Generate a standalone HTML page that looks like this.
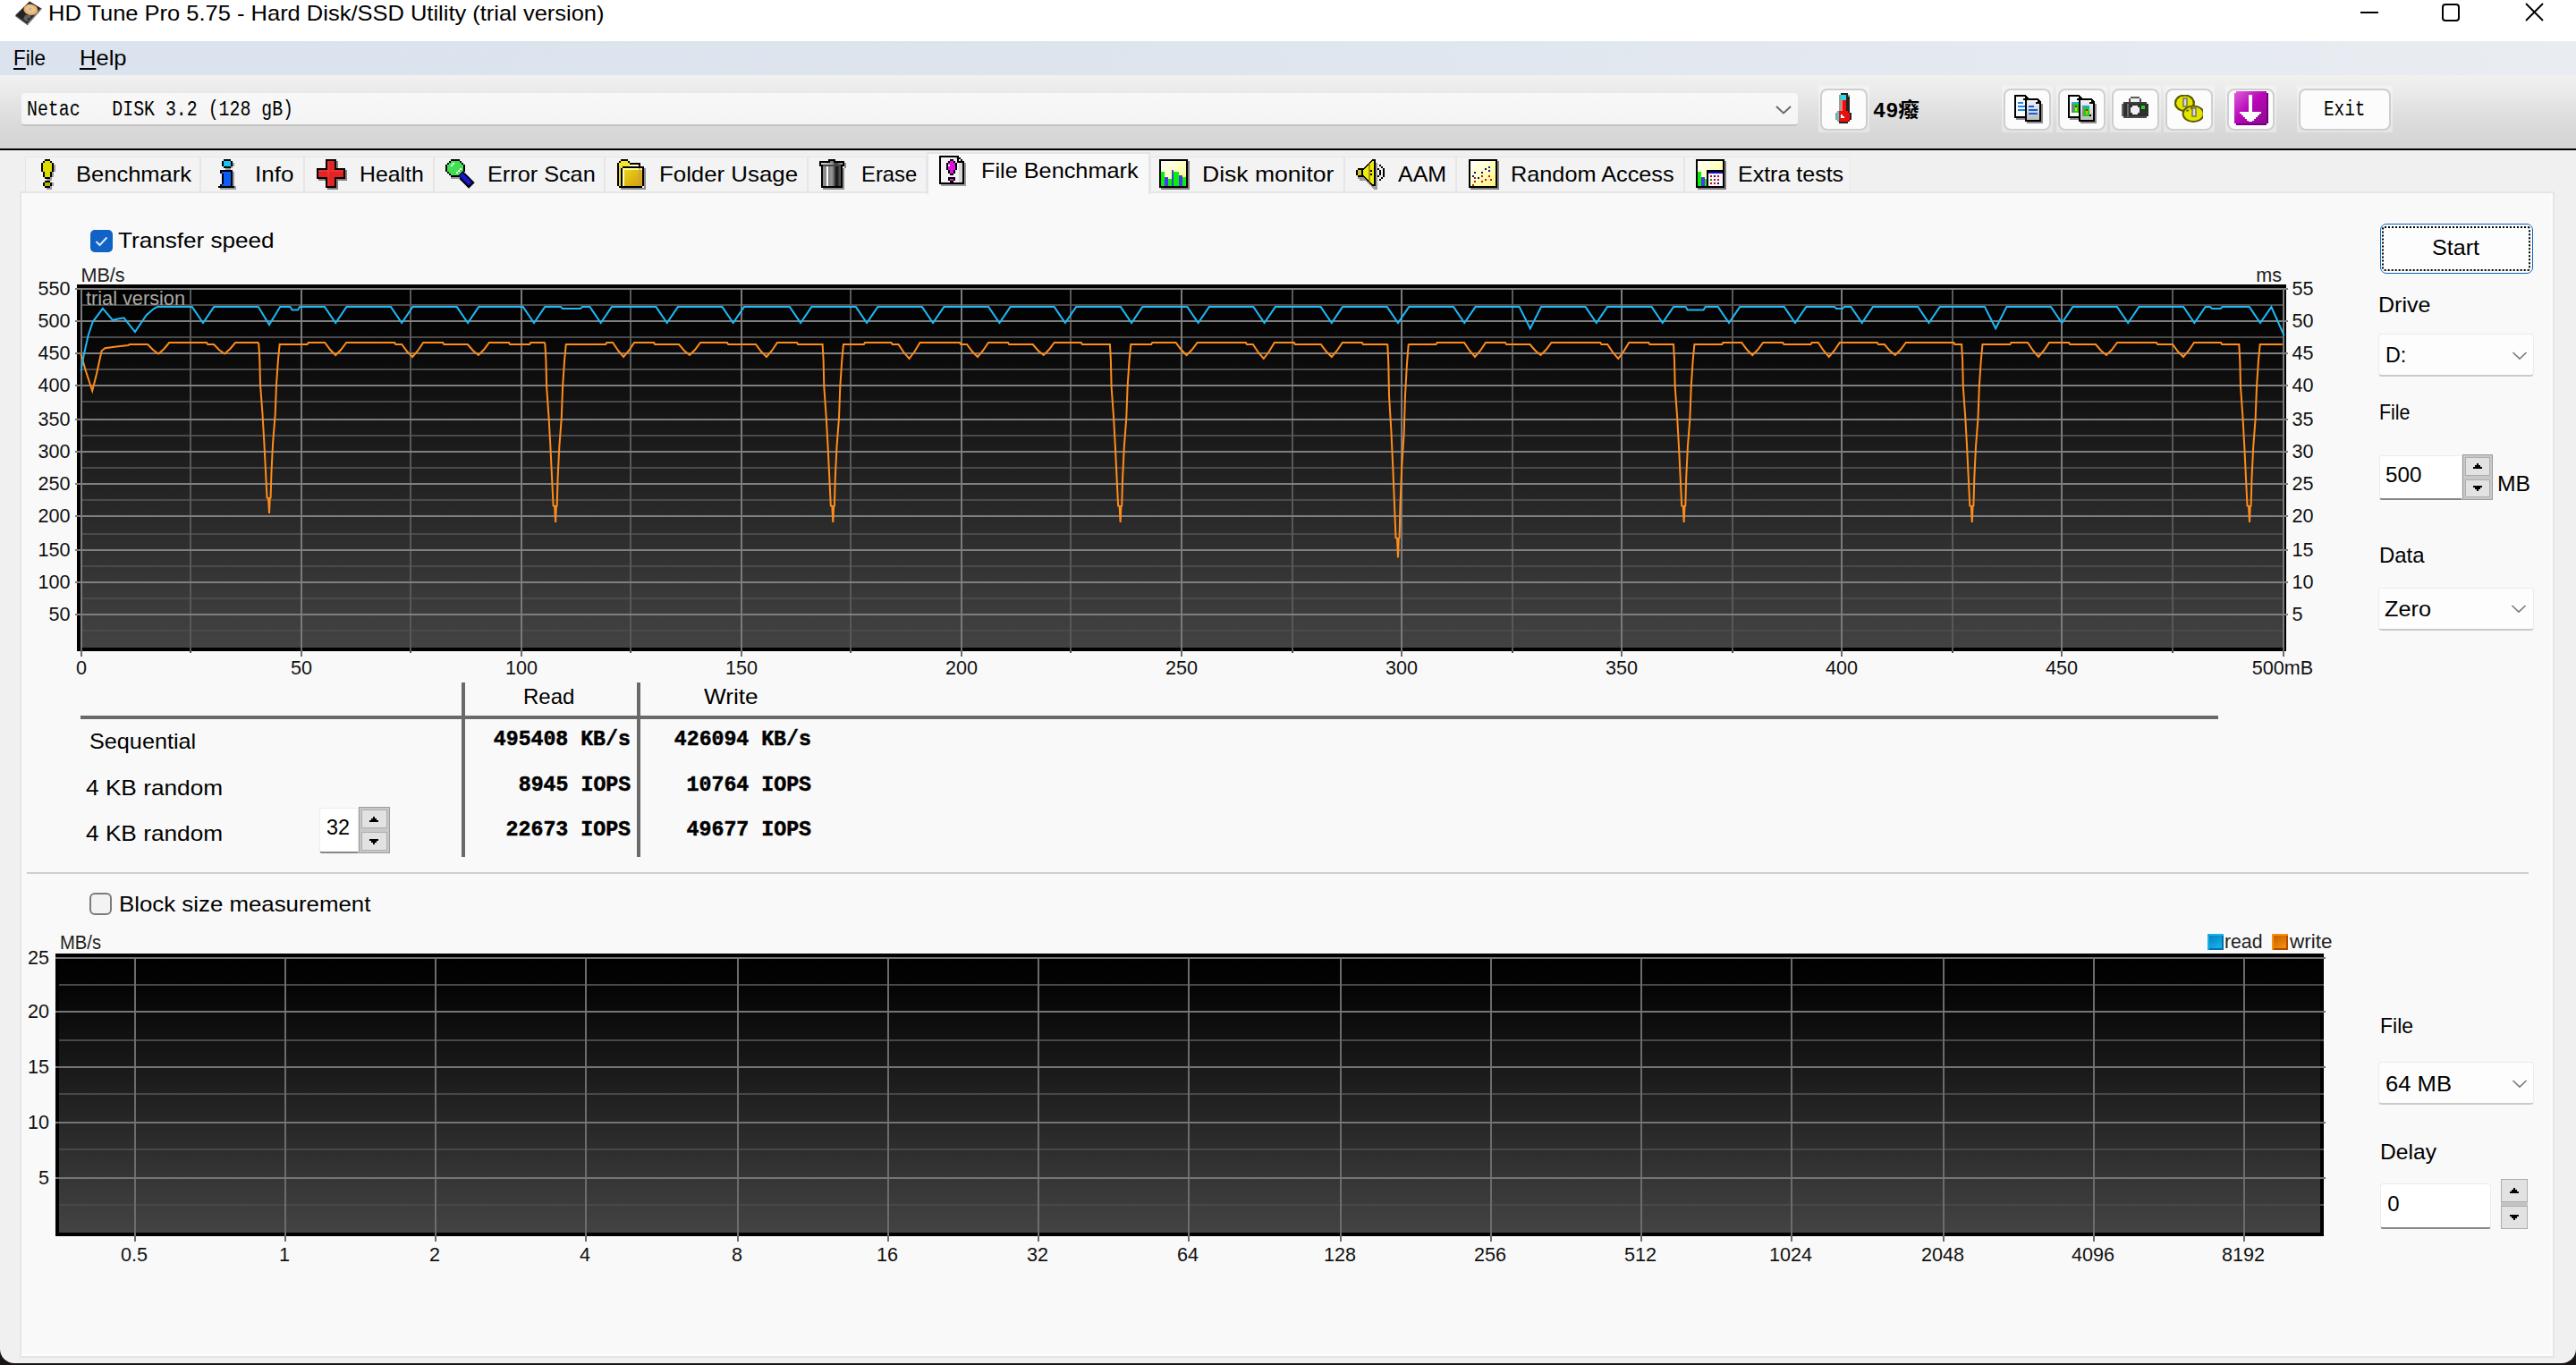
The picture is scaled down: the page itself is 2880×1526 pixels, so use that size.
<!DOCTYPE html>
<html lang="en"><head><meta charset="utf-8"><title>HD Tune Pro 5.75 - Hard Disk/SSD Utility (trial version)</title>
<style>
html,body{margin:0;padding:0;}
body{width:2880px;height:1526px;overflow:hidden;background:#1a1216;position:relative;font-family:"Liberation Sans",sans-serif;}
.a{position:absolute;}
div.a{box-sizing:border-box;}
.t{position:absolute;white-space:pre;line-height:1;}
.fsans{font-family:"Liberation Sans",sans-serif;}
.fmono{font-family:"Liberation Mono",monospace;}
.fserif{font-family:"Liberation Serif",serif;}
.fcjk{font-family:"Liberation Mono","Noto Sans CJK SC",monospace;}
.t u{text-decoration-thickness:2px;text-underline-offset:3px;}
.px{shape-rendering:crispEdges;}
</style></head>
<body>
<div class="a" style="left:0.00px;top:0.00px;width:2880.00px;height:1524.00px;background:#f0f0f0;border-radius:0 0 16px 16px;"></div>
<div class="a" style="left:0.00px;top:0.00px;width:2880.00px;height:46.00px;background:#fff;"></div>
<div class="a" style="left:0.00px;top:46.00px;width:2880.00px;height:38.00px;background:linear-gradient(90deg,#dbe3ee 0%,#dde4ee 40%,#e9edf2 100%);"></div>
<div class="a" style="left:0.00px;top:84.00px;width:2880.00px;height:82.00px;background:linear-gradient(180deg,#f1f1ef 0%,#ebebeb 20%,#e2e2e2 45%,#d9d9d9 72%,#d4d4d4 100%);"></div>
<div class="a" style="left:0.00px;top:166.00px;width:2880.00px;height:2.00px;background:#000;"></div>
<svg class="a" style="left:16px;top:0px" width="34" height="30" viewBox="16 0 34 30">
<polygon points="33,1.4 46.8,9.8 31.2,27.6 17.2,17" fill="#242424"/>
<polygon points="46.8,9.8 31.2,27.6 30.2,26.6 45.4,9.6" fill="#8a8a8a"/>
<polygon points="17.2,17 31.2,27.6 31.2,28.6 17.2,18.2" fill="#4a4a4a"/>
<ellipse cx="34.4" cy="10.8" rx="8" ry="6.2" fill="#e8b070" transform="rotate(8 34.4 10.8)"/>
<ellipse cx="34.2" cy="10.2" rx="5.4" ry="4" fill="#f0c488" transform="rotate(8 34.2 10.2)"/>
<ellipse cx="33.8" cy="10.4" rx="2" ry="1.7" fill="#b4bcb4"/>
<polygon points="28,17 35,16.5 33,23 29,24 26,21" fill="#6c6c6c" opacity="0.85"/>
<rect x="31" y="20.5" width="2" height="1.6" fill="#111"/>
</svg>
<span class="t fsans" id="t1" style="top:2.88px;font-size:24.00px;color:#000;left:54.30px;transform-origin:0 0;transform:scaleX(1.0615);">HD Tune Pro 5.75 - Hard Disk/SSD Utility (trial version)</span>
<svg class="a" style="left:2630px;top:0" width="230" height="30" viewBox="0 0 230 30" fill="none" stroke="#000" stroke-width="2">
<line x1="9" y1="14" x2="29" y2="14"/>
<rect x="101" y="5" width="18" height="18" rx="3"/>
<path d="M194,4 L213,23 M213,4 L194,23" stroke-width="1.9"/>
</svg>
<span class="t fsans" id="t2" style="top:52.68px;font-size:24.00px;color:#000;left:14.80px;transform-origin:0 0;transform:scaleX(0.9305);"><u>F</u>ile</span>
<span class="t fsans" id="t3" style="top:52.68px;font-size:24.00px;color:#000;left:88.80px;transform-origin:0 0;transform:scaleX(1.0633);"><u>H</u>elp</span>
<div class="a" style="left:24.00px;top:104.00px;width:1986.00px;height:37.00px;background:linear-gradient(180deg,#f8f8f8,#f4f4f4);border-bottom:2px solid #c2c2c2;border-radius:4px;box-sizing:border-box;"></div>
<span class="t fmono" id="t4" style="top:112.08px;font-size:23.00px;color:#000;left:29.50px;transform-origin:0 0;transform:scaleX(0.8636);">Netac   DISK 3.2 (128 gB)</span>
<svg class="a" style="left:1984px;top:116px" width="20" height="14" viewBox="0 0 20 14" fill="none" stroke="#6a6a6a" stroke-width="2"><path d="M2,3 L10,10.5 L18,3"/></svg>
<div class="a" style="left:2032.50px;top:96.00px;width:57.00px;height:52.00px;background:rgba(255,255,255,0.35);"></div>
<div class="a" style="left:2034.50px;top:98.50px;width:53.00px;height:47.00px;background:#fcfcfc;border:2px solid #cfcfcf;border-radius:8px;box-sizing:border-box;"></div>
<div class="a" style="left:2238.40px;top:96.00px;width:57.00px;height:52.00px;background:rgba(255,255,255,0.35);"></div>
<div class="a" style="left:2240.40px;top:98.50px;width:53.00px;height:47.00px;background:#fcfcfc;border:2px solid #cfcfcf;border-radius:8px;box-sizing:border-box;"></div>
<div class="a" style="left:2298.60px;top:96.00px;width:57.00px;height:52.00px;background:rgba(255,255,255,0.35);"></div>
<div class="a" style="left:2300.60px;top:98.50px;width:53.00px;height:47.00px;background:#fcfcfc;border:2px solid #cfcfcf;border-radius:8px;box-sizing:border-box;"></div>
<div class="a" style="left:2358.50px;top:96.00px;width:57.00px;height:52.00px;background:rgba(255,255,255,0.35);"></div>
<div class="a" style="left:2360.50px;top:98.50px;width:53.00px;height:47.00px;background:#fcfcfc;border:2px solid #cfcfcf;border-radius:8px;box-sizing:border-box;"></div>
<div class="a" style="left:2418.50px;top:96.00px;width:57.00px;height:52.00px;background:rgba(255,255,255,0.35);"></div>
<div class="a" style="left:2420.50px;top:98.50px;width:53.00px;height:47.00px;background:#fcfcfc;border:2px solid #cfcfcf;border-radius:8px;box-sizing:border-box;"></div>
<div class="a" style="left:2488.40px;top:96.00px;width:57.00px;height:52.00px;background:rgba(255,255,255,0.35);"></div>
<div class="a" style="left:2490.40px;top:98.50px;width:53.00px;height:47.00px;background:#fcfcfc;border:2px solid #cfcfcf;border-radius:8px;box-sizing:border-box;"></div>
<div class="a" style="left:2568.40px;top:96.00px;width:107.00px;height:52.00px;background:rgba(255,255,255,0.35);"></div>
<div class="a" style="left:2570.40px;top:98.50px;width:103.00px;height:47.00px;background:#fcfcfc;border:2px solid #cfcfcf;border-radius:8px;box-sizing:border-box;"></div>
<span class="t fmono" id="t5" style="top:111.98px;font-size:23.00px;color:#000;left:2598.00px;transform-origin:0 0;transform:scaleX(0.8421);">Exit</span>
<span class="t fcjk" id="t6" style="top:113.88px;font-size:23.00px;color:#000;font-weight:bold;left:2094.00px;transform-origin:0 0;transform:scaleX(1.0275);">49癈</span>
<svg class="a px" style="left:2046.0px;top:104.0px" width="32" height="34" viewBox="0 0 16 17"><rect x="6" y="0" width="4" height="1" fill="#2a2020"/><rect x="5" y="1" width="1" height="1" fill="#90a0a0"/><rect x="6" y="1" width="3" height="1" fill="#30d8e0"/><rect x="9" y="1" width="1" height="1" fill="#2a2020"/><rect x="10" y="1" width="1" height="1" fill="#90a0a0"/><rect x="5" y="2" width="1" height="1" fill="#90a0a0"/><rect x="6" y="2" width="3" height="1" fill="#30d8e0"/><rect x="9" y="2" width="2" height="1" fill="#2a2020"/><rect x="5" y="3" width="1" height="1" fill="#90a0a0"/><rect x="6" y="3" width="3" height="1" fill="#30d8e0"/><rect x="9" y="3" width="2" height="1" fill="#2a2020"/><rect x="5" y="4" width="1" height="1" fill="#90a0a0"/><rect x="6" y="4" width="1" height="1" fill="#f08070"/><rect x="7" y="4" width="2" height="1" fill="#e81010"/><rect x="9" y="4" width="2" height="1" fill="#2a2020"/><rect x="5" y="5" width="1" height="1" fill="#90a0a0"/><rect x="6" y="5" width="1" height="1" fill="#f08070"/><rect x="7" y="5" width="2" height="1" fill="#e81010"/><rect x="9" y="5" width="2" height="1" fill="#2a2020"/><rect x="5" y="6" width="1" height="1" fill="#90a0a0"/><rect x="6" y="6" width="1" height="1" fill="#f08070"/><rect x="7" y="6" width="2" height="1" fill="#e81010"/><rect x="9" y="6" width="2" height="1" fill="#2a2020"/><rect x="5" y="7" width="1" height="1" fill="#90a0a0"/><rect x="6" y="7" width="1" height="1" fill="#f08070"/><rect x="7" y="7" width="2" height="1" fill="#e81010"/><rect x="9" y="7" width="2" height="1" fill="#2a2020"/><rect x="5" y="8" width="1" height="1" fill="#90a0a0"/><rect x="6" y="8" width="1" height="1" fill="#f08070"/><rect x="7" y="8" width="2" height="1" fill="#e81010"/><rect x="9" y="8" width="2" height="1" fill="#2a2020"/><rect x="5" y="9" width="1" height="1" fill="#90a0a0"/><rect x="6" y="9" width="1" height="1" fill="#f08070"/><rect x="7" y="9" width="2" height="1" fill="#e81010"/><rect x="9" y="9" width="2" height="1" fill="#2a2020"/><rect x="4" y="10" width="1" height="1" fill="#90a0a0"/><rect x="5" y="10" width="5" height="1" fill="#e81010"/><rect x="10" y="10" width="1" height="1" fill="#2a2020"/><rect x="3" y="11" width="1" height="1" fill="#90a0a0"/><rect x="4" y="11" width="1" height="1" fill="#30d8e0"/><rect x="5" y="11" width="6" height="1" fill="#e81010"/><rect x="11" y="11" width="1" height="1" fill="#2a2020"/><rect x="3" y="12" width="1" height="1" fill="#90a0a0"/><rect x="4" y="12" width="1" height="1" fill="#30d8e0"/><rect x="5" y="12" width="1" height="1" fill="#e81010"/><rect x="6" y="12" width="1" height="1" fill="#fff"/><rect x="7" y="12" width="4" height="1" fill="#e81010"/><rect x="11" y="12" width="1" height="1" fill="#2a2020"/><rect x="3" y="13" width="1" height="1" fill="#90a0a0"/><rect x="4" y="13" width="1" height="1" fill="#30d8e0"/><rect x="5" y="13" width="1" height="1" fill="#e81010"/><rect x="6" y="13" width="2" height="1" fill="#fff"/><rect x="8" y="13" width="3" height="1" fill="#e81010"/><rect x="11" y="13" width="1" height="1" fill="#2a2020"/><rect x="3" y="14" width="1" height="1" fill="#90a0a0"/><rect x="4" y="14" width="1" height="1" fill="#30d8e0"/><rect x="5" y="14" width="6" height="1" fill="#e81010"/><rect x="11" y="14" width="1" height="1" fill="#2a2020"/><rect x="4" y="15" width="1" height="1" fill="#90a0a0"/><rect x="5" y="15" width="5" height="1" fill="#e81010"/><rect x="10" y="15" width="1" height="1" fill="#900808"/><rect x="5" y="16" width="5" height="1" fill="#2a2020"/></svg>
<svg width="0" height="0" style="position:absolute"><defs><linearGradient id="pgr" x1="0" y1="0" x2="0" y2="1"><stop offset="0" stop-color="#f4f4f8"/><stop offset="1" stop-color="#bcbcbc"/></linearGradient></defs></svg>
<svg class="a px" style="left:2252.0px;top:106.0px" width="32" height="32" viewBox="0 0 16 16"><rect x="1" y="13" width="6" height="1" fill="#8c8c8c"/><rect x="7" y="15" width="9" height="1" fill="#8c8c8c"/><rect x="15" y="5" width="1" height="11" fill="#8c8c8c"/><path d="M0,0 h6 l2,2 v11 h-8 z" fill="#000"/><path d="M1,1 h4 v2 h2 v9 h-6 z" fill="#fafafa"/><rect x="5" y="1" width="1" height="1" fill="#fff"/><rect x="2" y="4" width="3" height="1" fill="#1888f0"/><rect x="2" y="6" width="5" height="1" fill="#1888f0"/><rect x="2" y="8" width="5" height="1" fill="#1888f0"/><path d="M6,2 h7 l2,2 v11 h-9 z" fill="#000"/><path d="M7,3 h5 v2 h2 v9 h-7 z" fill="url(#pgr)"/><rect x="12" y="3" width="1" height="1" fill="#ffffd8"/><rect x="8" y="6" width="3" height="1" fill="#1060e0"/><rect x="8" y="8" width="5" height="1" fill="#1060e0"/><rect x="8" y="10" width="5" height="1" fill="#1060e0"/></svg>
<svg class="a px" style="left:2312.0px;top:106.0px" width="32" height="32" viewBox="0 0 16 16"><rect x="1" y="13" width="6" height="1" fill="#8c8c8c"/><rect x="7" y="15" width="9" height="1" fill="#8c8c8c"/><rect x="15" y="5" width="1" height="11" fill="#8c8c8c"/><path d="M0,0 h6 l2,2 v11 h-8 z" fill="#000"/><path d="M1,1 h4 v2 h2 v9 h-6 z" fill="#fafafa"/><rect x="5" y="1" width="1" height="1" fill="#fff"/><rect x="2" y="4" width="4" height="6" fill="#18d018"/><rect x="2" y="4" width="4" height="1" fill="#18b8e0"/><rect x="2" y="5" width="1" height="5" fill="#9060c0"/><rect x="4" y="6" width="1" height="1" fill="#c01010"/><rect x="4" y="7" width="1" height="2" fill="#c8e010"/><path d="M6,2 h7 l2,2 v11 h-9 z" fill="#000"/><path d="M7,3 h5 v2 h2 v9 h-7 z" fill="url(#pgr)"/><rect x="12" y="3" width="1" height="1" fill="#ffffd8"/><rect x="8" y="6" width="4" height="6" fill="#18d018"/><rect x="8" y="6" width="4" height="1" fill="#18a8e8"/><rect x="8" y="7" width="1" height="5" fill="#808890"/><rect x="10" y="8" width="1" height="1" fill="#c01010"/><rect x="10" y="9" width="1" height="2" fill="#c8c010"/><rect x="12" y="11" width="1" height="1" fill="#000"/></svg>
<svg class="a px" style="left:2372.0px;top:106.0px" width="32" height="32" viewBox="0 0 16 16"><rect x="4" y="2" width="7" height="3" fill="#4a4a4a"/><rect x="5" y="1" width="5" height="1" fill="#5a5a5a"/><rect x="5" y="2" width="5" height="2" fill="#eee"/><rect x="0" y="5" width="15" height="7" fill="#303030"/><rect x="1" y="4" width="13" height="1" fill="#3c3c3c"/><rect x="1" y="12" width="13" height="1" fill="#4c4c4c"/><rect x="0" y="5" width="1" height="7" fill="#6a6a6a"/><rect x="3" y="5" width="1" height="7" fill="#6c6c6c"/><rect x="6" y="6" width="3" height="5" fill="#f0eef4"/><rect x="5" y="7" width="5" height="3" fill="#f0eef4"/><rect x="11" y="6" width="2" height="2" fill="#18d818"/></svg>
<svg class="a" style="left:2431.0px;top:106.0px" width="32" height="32" viewBox="0 0 16 16"><ellipse cx="5.7" cy="4.6" rx="5.2" ry="4.4" fill="#e4e400" stroke="#5c5c00" stroke-width="1"/><ellipse cx="10.6" cy="10.6" rx="5.8" ry="4.4" fill="#e4e400" stroke="#5c5c00" stroke-width="1"/><ellipse cx="5.7" cy="4.6" rx="5.2" ry="4.4" fill="none" stroke="#5c5c00" stroke-width="1" stroke-dasharray="1.3 1.3"/><rect x="5" y="2" width="2" height="4.5" fill="#d8d8e8" stroke="#707048" stroke-width="0.7"/><rect x="10" y="7.5" width="2" height="4.5" fill="#d8d8e8" stroke="#707048" stroke-width="0.7"/></svg>
<svg class="a" style="left:2498px;top:102px" width="38" height="38" viewBox="0 0 38 38">
<defs><linearGradient id="pg" x1="0" y1="0" x2="1" y2="1"><stop offset="0" stop-color="#dc60dc"/><stop offset="0.45" stop-color="#b808b8"/><stop offset="1" stop-color="#8c0890"/></linearGradient></defs>
<path d="M2,0 h34 v2 h2 v34 h-2 v2 h-34 v-2 h-2 v-34 h2 z" fill="url(#pg)"/>
<path d="M36,2 h2 v34 h-2 v2 h-34 v-2 h34 z" fill="#680070" opacity="0.8"/>
<path d="M16,4 h4 v19 h10 v2 h-2 v2 h-2 v2 h-2 v2 h-2 v2 h-2 v1 h-4 v-1 h-2 v-2 h-2 v-2 h-2 v-2 h-2 v-2 h-2 v-2 h10 z" fill="#fff"/>
</svg>
<div class="a" style="left:28.00px;top:175.00px;width:196.00px;height:40.00px;background:#f3f3f3;border:1px solid #e6e6e6;border-bottom:none;box-sizing:border-box;"></div>
<span class="t fsans" id="t7" style="top:182.68px;font-size:24.00px;color:#000;left:85.40px;transform-origin:0 0;transform:scaleX(1.0627);">Benchmark</span>
<div class="a" style="left:224.00px;top:175.00px;width:116.00px;height:40.00px;background:#f3f3f3;border:1px solid #e6e6e6;border-bottom:none;box-sizing:border-box;"></div>
<span class="t fsans" id="t8" style="top:182.68px;font-size:24.00px;color:#000;left:285.20px;transform-origin:0 0;transform:scaleX(1.0842);">Info</span>
<div class="a" style="left:340.00px;top:175.00px;width:145.00px;height:40.00px;background:#f3f3f3;border:1px solid #e6e6e6;border-bottom:none;box-sizing:border-box;"></div>
<span class="t fsans" id="t9" style="top:182.68px;font-size:24.00px;color:#000;left:401.70px;transform-origin:0 0;transform:scaleX(1.0335);">Health</span>
<div class="a" style="left:485.00px;top:175.00px;width:191.00px;height:40.00px;background:#f3f3f3;border:1px solid #e6e6e6;border-bottom:none;box-sizing:border-box;"></div>
<span class="t fsans" id="t10" style="top:182.68px;font-size:24.00px;color:#000;left:545.00px;transform-origin:0 0;transform:scaleX(1.0523);">Error Scan</span>
<div class="a" style="left:676.00px;top:175.00px;width:227.00px;height:40.00px;background:#f3f3f3;border:1px solid #e6e6e6;border-bottom:none;box-sizing:border-box;"></div>
<span class="t fsans" id="t11" style="top:182.68px;font-size:24.00px;color:#000;left:736.80px;transform-origin:0 0;transform:scaleX(1.0758);">Folder Usage</span>
<div class="a" style="left:903.00px;top:175.00px;width:133.00px;height:40.00px;background:#f3f3f3;border:1px solid #e6e6e6;border-bottom:none;box-sizing:border-box;"></div>
<span class="t fsans" id="t12" style="top:182.68px;font-size:24.00px;color:#000;left:962.80px;transform-origin:0 0;transform:scaleX(0.9920);">Erase</span>
<div class="a" style="left:1286.00px;top:175.00px;width:217.00px;height:40.00px;background:#f3f3f3;border:1px solid #e6e6e6;border-bottom:none;box-sizing:border-box;"></div>
<span class="t fsans" id="t13" style="top:182.68px;font-size:24.00px;color:#000;left:1343.60px;transform-origin:0 0;transform:scaleX(1.1053);">Disk monitor</span>
<div class="a" style="left:1503.00px;top:175.00px;width:125.00px;height:40.00px;background:#f3f3f3;border:1px solid #e6e6e6;border-bottom:none;box-sizing:border-box;"></div>
<span class="t fsans" id="t14" style="top:182.68px;font-size:24.00px;color:#000;left:1562.60px;transform-origin:0 0;transform:scaleX(1.0401);">AAM</span>
<div class="a" style="left:1628.00px;top:175.00px;width:255.00px;height:40.00px;background:#f3f3f3;border:1px solid #e6e6e6;border-bottom:none;box-sizing:border-box;"></div>
<span class="t fsans" id="t15" style="top:182.68px;font-size:24.00px;color:#000;left:1688.80px;transform-origin:0 0;transform:scaleX(1.0529);">Random Access</span>
<div class="a" style="left:1883.00px;top:175.00px;width:186.00px;height:40.00px;background:#f3f3f3;border:1px solid #e6e6e6;border-bottom:none;box-sizing:border-box;"></div>
<span class="t fsans" id="t16" style="top:182.68px;font-size:24.00px;color:#000;left:1943.40px;transform-origin:0 0;transform:scaleX(1.0417);">Extra tests</span>
<div class="a" style="left:22.00px;top:214.00px;width:2834.00px;height:1304.00px;background:#f9f9f9;border:2px solid #e5e5e5;box-sizing:border-box;box-shadow:inset -3px -3px 0 #fcfcfc;"></div>
<div class="a" style="left:1036.00px;top:170.00px;width:250.00px;height:47.00px;background:#f9f9f9;border:2px solid #e5e5e5;border-bottom:none;box-sizing:border-box;"></div>
<span class="t fsans" id="t17" style="top:179.18px;font-size:24.00px;color:#000;left:1097.00px;transform-origin:0 0;transform:scaleX(1.0532);">File Benchmark</span>
<svg class="a px" style="left:38.0px;top:178.0px" width="32" height="34" viewBox="0 0 16 17"><rect x="6" y="0" width="3" height="1" fill="#000"/><rect x="5" y="1" width="1" height="1" fill="#000"/><rect x="6" y="1" width="3" height="1" fill="#dcdc00"/><rect x="9" y="1" width="1" height="1" fill="#000"/><rect x="4" y="2" width="1" height="1" fill="#000"/><rect x="5" y="2" width="5" height="1" fill="#dcdc00"/><rect x="10" y="2" width="1" height="1" fill="#000"/><rect x="4" y="3" width="1" height="1" fill="#000"/><rect x="5" y="3" width="5" height="1" fill="#dcdc00"/><rect x="10" y="3" width="1" height="1" fill="#000"/><rect x="11" y="3" width="1" height="1" fill="#9c9c9c"/><rect x="4" y="4" width="1" height="1" fill="#000"/><rect x="5" y="4" width="5" height="1" fill="#dcdc00"/><rect x="10" y="4" width="1" height="1" fill="#000"/><rect x="11" y="4" width="1" height="1" fill="#9c9c9c"/><rect x="4" y="5" width="1" height="1" fill="#000"/><rect x="5" y="5" width="5" height="1" fill="#dcdc00"/><rect x="10" y="5" width="1" height="1" fill="#000"/><rect x="11" y="5" width="1" height="1" fill="#9c9c9c"/><rect x="4" y="6" width="1" height="1" fill="#000"/><rect x="5" y="6" width="5" height="1" fill="#dcdc00"/><rect x="10" y="6" width="1" height="1" fill="#000"/><rect x="11" y="6" width="1" height="1" fill="#9c9c9c"/><rect x="5" y="7" width="1" height="1" fill="#000"/><rect x="6" y="7" width="3" height="1" fill="#dcdc00"/><rect x="9" y="7" width="1" height="1" fill="#000"/><rect x="10" y="7" width="1" height="1" fill="#9c9c9c"/><rect x="5" y="8" width="1" height="1" fill="#000"/><rect x="6" y="8" width="3" height="1" fill="#dcdc00"/><rect x="9" y="8" width="1" height="1" fill="#000"/><rect x="10" y="8" width="1" height="1" fill="#9c9c9c"/><rect x="5" y="9" width="1" height="1" fill="#000"/><rect x="6" y="9" width="3" height="1" fill="#dcdc00"/><rect x="9" y="9" width="1" height="1" fill="#000"/><rect x="10" y="9" width="1" height="1" fill="#9c9c9c"/><rect x="6" y="10" width="3" height="1" fill="#000"/><rect x="9" y="10" width="1" height="1" fill="#9c9c9c"/><rect x="7" y="11" width="3" height="1" fill="#9c9c9c"/><rect x="6" y="12" width="3" height="1" fill="#000"/><rect x="5" y="13" width="1" height="1" fill="#000"/><rect x="6" y="13" width="3" height="1" fill="#b4b400"/><rect x="9" y="13" width="1" height="1" fill="#000"/><rect x="10" y="13" width="1" height="1" fill="#9c9c9c"/><rect x="5" y="14" width="1" height="1" fill="#000"/><rect x="6" y="14" width="3" height="1" fill="#b4b400"/><rect x="9" y="14" width="1" height="1" fill="#000"/><rect x="10" y="14" width="1" height="1" fill="#9c9c9c"/><rect x="6" y="15" width="3" height="1" fill="#000"/><rect x="9" y="15" width="1" height="1" fill="#9c9c9c"/><rect x="7" y="16" width="3" height="1" fill="#9c9c9c"/></svg>
<svg class="a px" style="left:238.0px;top:178.0px" width="32" height="34" viewBox="0 0 16 17"><rect x="6" y="0" width="4" height="1" fill="#000"/><rect x="5" y="1" width="1" height="1" fill="#000"/><rect x="6" y="1" width="4" height="1" fill="#18c4f0"/><rect x="10" y="1" width="1" height="1" fill="#000"/><rect x="5" y="2" width="1" height="1" fill="#000"/><rect x="6" y="2" width="4" height="1" fill="#18c4f0"/><rect x="10" y="2" width="1" height="1" fill="#000"/><rect x="11" y="2" width="1" height="1" fill="#9c9c9c"/><rect x="5" y="3" width="1" height="1" fill="#000"/><rect x="6" y="3" width="4" height="1" fill="#18c4f0"/><rect x="10" y="3" width="1" height="1" fill="#000"/><rect x="11" y="3" width="1" height="1" fill="#9c9c9c"/><rect x="6" y="4" width="4" height="1" fill="#000"/><rect x="10" y="4" width="1" height="1" fill="#9c9c9c"/><rect x="7" y="5" width="3" height="1" fill="#9c9c9c"/><rect x="4" y="6" width="7" height="1" fill="#000"/><rect x="4" y="7" width="1" height="1" fill="#000"/><rect x="5" y="7" width="5" height="1" fill="#0c5cf8"/><rect x="10" y="7" width="1" height="1" fill="#000"/><rect x="11" y="7" width="1" height="1" fill="#9c9c9c"/><rect x="5" y="8" width="1" height="1" fill="#000"/><rect x="6" y="8" width="4" height="1" fill="#0c5cf8"/><rect x="10" y="8" width="1" height="1" fill="#000"/><rect x="11" y="8" width="1" height="1" fill="#9c9c9c"/><rect x="5" y="9" width="1" height="1" fill="#000"/><rect x="6" y="9" width="4" height="1" fill="#0c5cf8"/><rect x="10" y="9" width="1" height="1" fill="#000"/><rect x="11" y="9" width="1" height="1" fill="#9c9c9c"/><rect x="5" y="10" width="1" height="1" fill="#000"/><rect x="6" y="10" width="4" height="1" fill="#0c5cf8"/><rect x="10" y="10" width="1" height="1" fill="#000"/><rect x="11" y="10" width="1" height="1" fill="#9c9c9c"/><rect x="5" y="11" width="1" height="1" fill="#000"/><rect x="6" y="11" width="4" height="1" fill="#0c5cf8"/><rect x="10" y="11" width="1" height="1" fill="#000"/><rect x="11" y="11" width="1" height="1" fill="#9c9c9c"/><rect x="5" y="12" width="1" height="1" fill="#000"/><rect x="6" y="12" width="4" height="1" fill="#0c5cf8"/><rect x="10" y="12" width="1" height="1" fill="#000"/><rect x="11" y="12" width="1" height="1" fill="#9c9c9c"/><rect x="5" y="13" width="1" height="1" fill="#000"/><rect x="6" y="13" width="4" height="1" fill="#0c5cf8"/><rect x="10" y="13" width="1" height="1" fill="#000"/><rect x="11" y="13" width="1" height="1" fill="#9c9c9c"/><rect x="4" y="14" width="1" height="1" fill="#000"/><rect x="5" y="14" width="5" height="1" fill="#0c5cf8"/><rect x="10" y="14" width="1" height="1" fill="#000"/><rect x="11" y="14" width="1" height="1" fill="#9c9c9c"/><rect x="3" y="15" width="9" height="1" fill="#000"/><rect x="12" y="15" width="1" height="1" fill="#9c9c9c"/><rect x="4" y="16" width="9" height="1" fill="#9c9c9c"/></svg>
<svg class="a px" style="left:354.0px;top:178.0px" width="34" height="34" viewBox="0 0 17 17"><path d="M6,1 h6 v5 h5 v6 h-5 v5 h-6 v-5 h-5 v-6 h5 z" fill="#808080"/><path d="M5,0 h6 v5 h5 v6 h-5 v5 h-6 v-5 h-5 v-6 h5 z" fill="#000"/><path d="M6,1 h4 v5 h5 v4 h-5 v5 h-4 v-5 h-5 v-4 h5 z" fill="#e42424"/><rect x="6" y="1" width="1" height="14" fill="#f04040" opacity="0.5"/><rect x="1" y="6" width="14" height="1" fill="#f04040" opacity="0.5"/></svg>
<svg class="a px" style="left:498.0px;top:178.0px" width="34" height="34" viewBox="0 0 17 17"><path d="M8.6,8.6 L14,14" stroke="#9c9c9c" stroke-width="4.4" transform="translate(0.9,0.9)"/><rect x="3" y="0" width="5" height="1" fill="#000"/><rect x="2" y="1" width="1" height="1" fill="#000"/><rect x="3" y="1" width="5" height="1" fill="#40e050"/><rect x="8" y="1" width="1" height="1" fill="#000"/><rect x="1" y="2" width="1" height="1" fill="#000"/><rect x="2" y="2" width="2" height="1" fill="#40e050"/><rect x="4" y="2" width="1" height="1" fill="#fff"/><rect x="5" y="2" width="4" height="1" fill="#40e050"/><rect x="9" y="2" width="1" height="1" fill="#000"/><rect x="0" y="3" width="1" height="1" fill="#000"/><rect x="1" y="3" width="2" height="1" fill="#40e050"/><rect x="3" y="3" width="1" height="1" fill="#fff"/><rect x="4" y="3" width="6" height="1" fill="#40e050"/><rect x="10" y="3" width="1" height="1" fill="#000"/><rect x="0" y="4" width="1" height="1" fill="#000"/><rect x="1" y="4" width="9" height="1" fill="#40e050"/><rect x="10" y="4" width="1" height="1" fill="#000"/><rect x="0" y="5" width="1" height="1" fill="#000"/><rect x="1" y="5" width="7" height="1" fill="#40e050"/><rect x="8" y="5" width="1" height="1" fill="#fff"/><rect x="9" y="5" width="1" height="1" fill="#40e050"/><rect x="10" y="5" width="1" height="1" fill="#000"/><rect x="0" y="6" width="1" height="1" fill="#000"/><rect x="1" y="6" width="6" height="1" fill="#40e050"/><rect x="7" y="6" width="1" height="1" fill="#fff"/><rect x="8" y="6" width="2" height="1" fill="#40e050"/><rect x="10" y="6" width="1" height="1" fill="#000"/><rect x="1" y="7" width="1" height="1" fill="#000"/><rect x="2" y="7" width="4" height="1" fill="#40e050"/><rect x="6" y="7" width="1" height="1" fill="#fff"/><rect x="7" y="7" width="2" height="1" fill="#40e050"/><rect x="9" y="7" width="1" height="1" fill="#000"/><rect x="2" y="8" width="1" height="1" fill="#000"/><rect x="3" y="8" width="5" height="1" fill="#40e050"/><rect x="8" y="8" width="1" height="1" fill="#000"/><rect x="3" y="9" width="5" height="1" fill="#000"/><g shape-rendering="auto"><path d="M8.2,8.2 L14.6,14.6" stroke="#000" stroke-width="4.6"/><path d="M8.6,7.8 L14,13.2" stroke="#1818c8" stroke-width="2.6" transform="translate(0,0.6)"/></g><rect x="3" y="10" width="5" height="1" fill="#9c9c9c"/></svg>
<svg class="a px" style="left:690.0px;top:178.0px" width="34" height="34" viewBox="0 0 17 17"><defs><linearGradient id="fg" x1="0" y1="0" x2="1" y2="1"><stop offset="0" stop-color="#ecd820"/><stop offset="1" stop-color="#d49c08"/></linearGradient></defs><rect x="15" y="5" width="1" height="11" fill="#8c8c8c"/><rect x="2" y="16" width="14" height="1" fill="#8c8c8c"/><rect x="2" y="0" width="4" height="1" fill="#000"/><rect x="1" y="1" width="1" height="1" fill="#000"/><rect x="6" y="1" width="1" height="1" fill="#000"/><rect x="0" y="2" width="1" height="13" fill="#000"/><rect x="7" y="2" width="6" height="1" fill="#000"/><rect x="12" y="3" width="1" height="1" fill="#000"/><rect x="2" y="1" width="4" height="1" fill="#f0e828"/><rect x="1" y="2" width="6" height="2" fill="#f0e828"/><rect x="1" y="4" width="2" height="11" fill="#ecd838"/><rect x="7" y="3" width="5" height="1" fill="#ffffc8"/><rect x="3" y="4" width="12" height="1" fill="#000"/><rect x="2" y="5" width="1" height="10" fill="#000"/><rect x="14" y="5" width="1" height="10" fill="#000"/><rect x="1" y="15" width="13" height="1" fill="#000"/><rect x="3" y="5" width="11" height="10" fill="url(#fg)"/><rect x="3" y="5" width="1" height="10" fill="#ffffc0"/><rect x="4" y="5" width="10" height="1" fill="#ffff98"/><rect x="12" y="5" width="1" height="10" fill="#c8a058" opacity="0.7"/></svg>
<svg class="a px" style="left:916.0px;top:178.0px" width="34" height="34" viewBox="0 0 17 17"><defs><linearGradient id="tg" x1="0" y1="0" x2="1" y2="0"><stop offset="0" stop-color="#8c8c8c"/><stop offset="0.2" stop-color="#8c8c8c"/><stop offset="0.2" stop-color="#fff"/><stop offset="0.3" stop-color="#fff"/><stop offset="0.3" stop-color="#7c7c7c"/><stop offset="0.5" stop-color="#9a9a9a"/><stop offset="0.6" stop-color="#6c6c6c"/><stop offset="0.7" stop-color="#2a2a2a"/><stop offset="0.8" stop-color="#101010"/><stop offset="0.9" stop-color="#444"/><stop offset="1" stop-color="#5a5a5a"/></linearGradient><linearGradient id="tl" x1="0" y1="0" x2="1" y2="0"><stop offset="0" stop-color="#d8d8d8"/><stop offset="0.5" stop-color="#a0a0a0"/><stop offset="0.7" stop-color="#333"/><stop offset="1" stop-color="#b0b0b0"/></linearGradient></defs><rect x="14" y="2" width="1" height="3" fill="#8c8c8c"/><rect x="13" y="5" width="1" height="12" fill="#8c8c8c"/><rect x="2" y="16" width="12" height="1" fill="#8c8c8c"/><rect x="5" y="0" width="4" height="1" fill="#000"/><rect x="0" y="1" width="14" height="3" fill="#000"/><rect x="1" y="4" width="12" height="12" fill="#000"/><rect x="1" y="2" width="12" height="1" fill="url(#tl)"/><rect x="6" y="1" width="2" height="1" fill="#777"/><rect x="2" y="4" width="10" height="11" fill="url(#tg)"/><rect x="2" y="3" width="10" height="1" fill="#444"/></svg>
<svg class="a px" style="left:1050.0px;top:174.0px" width="32" height="34" viewBox="0 0 16 17"><rect x="0" y="0" width="11" height="1" fill="#000"/><rect x="0" y="1" width="1" height="1" fill="#000"/><rect x="1" y="1" width="8" height="1" fill="#f4f4f4"/><rect x="9" y="1" width="1" height="1" fill="#d4d4d4"/><rect x="10" y="1" width="2" height="1" fill="#000"/><rect x="0" y="2" width="1" height="1" fill="#000"/><rect x="1" y="2" width="5" height="1" fill="#f4f4f4"/><rect x="6" y="2" width="2" height="1" fill="#000"/><rect x="8" y="2" width="2" height="1" fill="#f4f4f4"/><rect x="10" y="2" width="1" height="1" fill="#000"/><rect x="11" y="2" width="1" height="1" fill="#fff"/><rect x="12" y="2" width="1" height="1" fill="#000"/><rect x="0" y="3" width="1" height="1" fill="#000"/><rect x="1" y="3" width="4" height="1" fill="#f4f4f4"/><rect x="5" y="3" width="1" height="1" fill="#000"/><rect x="6" y="3" width="2" height="1" fill="#e010e0"/><rect x="8" y="3" width="1" height="1" fill="#000"/><rect x="9" y="3" width="1" height="1" fill="#f4f4f4"/><rect x="10" y="3" width="4" height="1" fill="#000"/><rect x="0" y="4" width="1" height="1" fill="#000"/><rect x="1" y="4" width="3" height="1" fill="#f4f4f4"/><rect x="4" y="4" width="1" height="1" fill="#000"/><rect x="5" y="4" width="4" height="1" fill="#e010e0"/><rect x="9" y="4" width="1" height="1" fill="#000"/><rect x="10" y="4" width="1" height="1" fill="#f4f4f4"/><rect x="11" y="4" width="2" height="1" fill="#d4d4d4"/><rect x="13" y="4" width="1" height="1" fill="#000"/><rect x="14" y="4" width="1" height="1" fill="#9c9c9c"/><rect x="0" y="5" width="1" height="1" fill="#000"/><rect x="1" y="5" width="3" height="1" fill="#f4f4f4"/><rect x="4" y="5" width="1" height="1" fill="#000"/><rect x="5" y="5" width="1" height="1" fill="#fff"/><rect x="6" y="5" width="3" height="1" fill="#e010e0"/><rect x="9" y="5" width="1" height="1" fill="#000"/><rect x="10" y="5" width="1" height="1" fill="#f4f4f4"/><rect x="11" y="5" width="2" height="1" fill="#d4d4d4"/><rect x="13" y="5" width="1" height="1" fill="#000"/><rect x="14" y="5" width="1" height="1" fill="#9c9c9c"/><rect x="0" y="6" width="1" height="1" fill="#000"/><rect x="1" y="6" width="3" height="1" fill="#f4f4f4"/><rect x="4" y="6" width="1" height="1" fill="#000"/><rect x="5" y="6" width="4" height="1" fill="#e010e0"/><rect x="9" y="6" width="1" height="1" fill="#000"/><rect x="10" y="6" width="1" height="1" fill="#f4f4f4"/><rect x="11" y="6" width="2" height="1" fill="#d4d4d4"/><rect x="13" y="6" width="1" height="1" fill="#000"/><rect x="14" y="6" width="1" height="1" fill="#9c9c9c"/><rect x="0" y="7" width="1" height="1" fill="#000"/><rect x="1" y="7" width="3" height="1" fill="#f4f4f4"/><rect x="4" y="7" width="1" height="1" fill="#000"/><rect x="5" y="7" width="4" height="1" fill="#e010e0"/><rect x="9" y="7" width="1" height="1" fill="#000"/><rect x="10" y="7" width="1" height="1" fill="#f4f4f4"/><rect x="11" y="7" width="2" height="1" fill="#d4d4d4"/><rect x="13" y="7" width="1" height="1" fill="#000"/><rect x="14" y="7" width="1" height="1" fill="#9c9c9c"/><rect x="0" y="8" width="1" height="1" fill="#000"/><rect x="1" y="8" width="4" height="1" fill="#f4f4f4"/><rect x="5" y="8" width="1" height="1" fill="#000"/><rect x="6" y="8" width="2" height="1" fill="#e010e0"/><rect x="8" y="8" width="1" height="1" fill="#000"/><rect x="9" y="8" width="2" height="1" fill="#f4f4f4"/><rect x="11" y="8" width="2" height="1" fill="#d4d4d4"/><rect x="13" y="8" width="1" height="1" fill="#000"/><rect x="14" y="8" width="1" height="1" fill="#9c9c9c"/><rect x="0" y="9" width="1" height="1" fill="#000"/><rect x="1" y="9" width="4" height="1" fill="#f4f4f4"/><rect x="5" y="9" width="1" height="1" fill="#000"/><rect x="6" y="9" width="2" height="1" fill="#e010e0"/><rect x="8" y="9" width="1" height="1" fill="#000"/><rect x="9" y="9" width="2" height="1" fill="#f4f4f4"/><rect x="11" y="9" width="2" height="1" fill="#d4d4d4"/><rect x="13" y="9" width="1" height="1" fill="#000"/><rect x="14" y="9" width="1" height="1" fill="#9c9c9c"/><rect x="0" y="10" width="1" height="1" fill="#000"/><rect x="1" y="10" width="5" height="1" fill="#f4f4f4"/><rect x="6" y="10" width="2" height="1" fill="#000"/><rect x="8" y="10" width="3" height="1" fill="#f4f4f4"/><rect x="11" y="10" width="2" height="1" fill="#d4d4d4"/><rect x="13" y="10" width="1" height="1" fill="#000"/><rect x="14" y="10" width="1" height="1" fill="#9c9c9c"/><rect x="0" y="11" width="1" height="1" fill="#000"/><rect x="1" y="11" width="10" height="1" fill="#f4f4f4"/><rect x="11" y="11" width="2" height="1" fill="#d4d4d4"/><rect x="13" y="11" width="1" height="1" fill="#000"/><rect x="14" y="11" width="1" height="1" fill="#9c9c9c"/><rect x="0" y="12" width="1" height="1" fill="#000"/><rect x="1" y="12" width="4" height="1" fill="#f4f4f4"/><rect x="5" y="12" width="4" height="1" fill="#000"/><rect x="9" y="12" width="2" height="1" fill="#f4f4f4"/><rect x="11" y="12" width="2" height="1" fill="#d4d4d4"/><rect x="13" y="12" width="1" height="1" fill="#000"/><rect x="14" y="12" width="1" height="1" fill="#9c9c9c"/><rect x="0" y="13" width="1" height="1" fill="#000"/><rect x="1" y="13" width="4" height="1" fill="#f4f4f4"/><rect x="5" y="13" width="1" height="1" fill="#000"/><rect x="6" y="13" width="2" height="1" fill="#e010e0"/><rect x="8" y="13" width="1" height="1" fill="#000"/><rect x="9" y="13" width="2" height="1" fill="#f4f4f4"/><rect x="11" y="13" width="2" height="1" fill="#d4d4d4"/><rect x="13" y="13" width="1" height="1" fill="#000"/><rect x="14" y="13" width="1" height="1" fill="#9c9c9c"/><rect x="0" y="14" width="1" height="1" fill="#000"/><rect x="1" y="14" width="5" height="1" fill="#f4f4f4"/><rect x="6" y="14" width="2" height="1" fill="#000"/><rect x="8" y="14" width="3" height="1" fill="#f4f4f4"/><rect x="11" y="14" width="2" height="1" fill="#d4d4d4"/><rect x="13" y="14" width="1" height="1" fill="#000"/><rect x="14" y="14" width="1" height="1" fill="#9c9c9c"/><rect x="0" y="15" width="14" height="1" fill="#000"/><rect x="14" y="15" width="1" height="1" fill="#9c9c9c"/><rect x="1" y="16" width="14" height="1" fill="#9c9c9c"/></svg>
<svg width="0" height="0" style="position:absolute"><defs><linearGradient id="yg" x1="0" y1="0" x2="1" y2="1"><stop offset="0" stop-color="#ffffff"/><stop offset="0.5" stop-color="#ffffc0"/><stop offset="1" stop-color="#fff080"/></linearGradient></defs></svg>
<svg class="a px" style="left:1296.0px;top:178.0px" width="34" height="34" viewBox="0 0 17 17"><rect x="1" y="1" width="16" height="16" fill="#808080"/><rect x="0" y="0" width="16" height="16" fill="#000"/><rect x="1" y="1" width="14" height="14" fill="url(#yg)"/><rect x="1" y="7" width="2" height="8" fill="#08f008"/><rect x="3" y="10" width="2" height="5" fill="#4838f0"/><rect x="5" y="11" width="2" height="4" fill="#08f008"/><rect x="7" y="6" width="1" height="9" fill="#3848d8"/><rect x="8" y="7" width="3" height="8" fill="#08f008"/><rect x="11" y="9" width="2" height="6" fill="#4838f0"/><rect x="13" y="10" width="2" height="5" fill="#08f008"/></svg>
<svg class="a px" style="left:1516.0px;top:178.0px" width="34" height="34" viewBox="0 0 17 17"><path d="M1,6 h3 l5,-5 h2 v15 h-2 l-5,-5 h-3 v-1 h-1 v-3 h1 z" fill="#9c9c9c" transform="translate(1,1)"/><path d="M1,5 h3 l5,-5 h2 v15 h-2 l-5,-5 h-3 v-1 h-1 v-3 h1 z" fill="#000"/><path d="M1,6 h2 v3 h-2 z" fill="#c8c820"/><path d="M4,6 l5,-5 h1 v13 h-1 l-5,-5 z" fill="#ecec10"/><rect x="7" y="2" width="1" height="11" fill="#806010" opacity="0.6"/><rect x="8" y="6" width="1" height="1" fill="#000"/><rect x="8" y="8" width="1" height="1" fill="#000"/><rect x="12" y="5" width="1" height="1" fill="#000"/><rect x="13" y="6" width="1" height="1" fill="#000"/><rect x="13" y="7" width="1" height="1" fill="#000"/><rect x="13" y="8" width="1" height="1" fill="#000"/><rect x="12" y="9" width="1" height="1" fill="#000"/><rect x="13" y="3" width="1" height="1" fill="#000"/><rect x="14" y="4" width="1" height="1" fill="#000"/><rect x="15" y="5" width="1" height="1" fill="#000"/><rect x="15" y="6" width="1" height="1" fill="#000"/><rect x="15" y="7" width="1" height="1" fill="#000"/><rect x="15" y="8" width="1" height="1" fill="#000"/><rect x="15" y="9" width="1" height="1" fill="#000"/><rect x="14" y="10" width="1" height="1" fill="#000"/><rect x="13" y="11" width="1" height="1" fill="#000"/></svg>
<svg class="a px" style="left:1642.0px;top:178.0px" width="34" height="34" viewBox="0 0 17 17"><rect x="1" y="1" width="16" height="16" fill="#808080"/><rect x="0" y="0" width="16" height="16" fill="#000"/><rect x="1" y="1" width="14" height="14" fill="url(#yg)"/><rect x="11" y="4" width="1" height="1" fill="#0c0c98"/><rect x="9" y="5" width="1" height="1" fill="#0c0c98"/><rect x="11" y="6" width="1" height="1" fill="#0c0c98"/><rect x="3" y="7" width="1" height="1" fill="#0c0c98"/><rect x="7" y="7" width="1" height="1" fill="#0c0c98"/><rect x="2" y="9" width="1" height="1" fill="#0c0c98"/><rect x="5" y="10" width="1" height="1" fill="#0c0c98"/><rect x="7" y="9" width="1" height="1" fill="#c01808"/><rect x="11" y="9" width="1" height="1" fill="#c01808"/><rect x="3" y="10" width="1" height="1" fill="#c01808"/><rect x="9" y="11" width="1" height="1" fill="#c01808"/><rect x="12" y="11" width="1" height="1" fill="#c01808"/><rect x="3" y="12" width="1" height="1" fill="#c01808"/><rect x="7" y="12" width="1" height="1" fill="#c01808"/><rect x="2" y="14" width="1" height="1" fill="#c01808"/></svg>
<svg class="a px" style="left:1896.0px;top:178.0px" width="34" height="34" viewBox="0 0 17 17"><rect x="1" y="1" width="16" height="16" fill="#808080"/><rect x="0" y="0" width="16" height="16" fill="#000"/><rect x="1" y="1" width="14" height="14" fill="url(#yg)"/><rect x="1" y="7" width="2" height="8" fill="#08f008"/><rect x="3" y="10" width="2" height="5" fill="#4838f0"/><rect x="5" y="11" width="1" height="4" fill="#08f008"/><rect x="6" y="6" width="10" height="10" fill="#000"/><rect x="7" y="7" width="8" height="1" fill="#1010c0"/><rect x="7" y="8" width="8" height="7" fill="#fcf4fc"/><rect x="8" y="9" width="1" height="1" fill="#c01010"/><rect x="10" y="9" width="1" height="1" fill="#0c0ca0"/><rect x="12" y="9" width="1" height="1" fill="#c01010"/><rect x="8" y="11" width="1" height="1" fill="#089018"/><rect x="10" y="11" width="1" height="1" fill="#c01010"/><rect x="12" y="11" width="1" height="1" fill="#c01010"/><rect x="8" y="13" width="1" height="1" fill="#c01010"/><rect x="10" y="13" width="1" height="1" fill="#c01010"/><rect x="12" y="13" width="1" height="1" fill="#0c0ca0"/></svg>
<div class="a" style="left:100.50px;top:256.50px;width:25.00px;height:25.00px;background:#1062c4;border-radius:5px;"><svg width="25" height="25" viewBox="0 0 25 25" style="position:absolute;left:0;top:0"><path d="M6.5,13 L10.5,17 L18.5,8.5" fill="none" stroke="#d8e8ff" stroke-width="2"/></svg></div>
<span class="t fsans" id="t18" style="top:257.28px;font-size:24.00px;color:#000;left:132.20px;transform-origin:0 0;transform:scaleX(1.0876);">Transfer speed</span>
<svg class="a" style="left:0;top:0" width="2880" height="1000" viewBox="0 0 2880 1000">
<defs><linearGradient id="cg" x1="0" y1="0" x2="0" y2="1"><stop offset="0" stop-color="#000"/><stop offset="0.12" stop-color="#050505"/><stop offset="1" stop-color="#434343"/></linearGradient></defs>
<rect x="86" y="318" width="2470" height="410" fill="#000"/>
<rect x="90" y="322" width="2464" height="402" fill="url(#cg)"/>
<rect x="90" y="340" width="2464" height="2" fill="#4a4a4a"/>
<rect x="90" y="376" width="2464" height="2" fill="#4a4a4a"/>
<rect x="90" y="412" width="2464" height="2" fill="#4a4a4a"/>
<rect x="90" y="448" width="2464" height="2" fill="#4a4a4a"/>
<rect x="90" y="486" width="2464" height="2" fill="#4a4a4a"/>
<rect x="90" y="522" width="2464" height="2" fill="#4a4a4a"/>
<rect x="90" y="558" width="2464" height="2" fill="#4a4a4a"/>
<rect x="90" y="596" width="2464" height="2" fill="#4a4a4a"/>
<rect x="90" y="632" width="2464" height="2" fill="#4a4a4a"/>
<rect x="90" y="668" width="2464" height="2" fill="#4a4a4a"/>
<rect x="90" y="704" width="2464" height="2" fill="#4a4a4a"/>
<rect x="90" y="322" width="2" height="402" fill="#7a7a7a"/>
<rect x="90" y="724" width="2" height="10" fill="#6e6e6e"/>
<rect x="212" y="322" width="2" height="402" fill="#585858"/>
<rect x="212" y="724" width="2" height="6" fill="#555"/>
<rect x="336" y="322" width="2" height="402" fill="#7a7a7a"/>
<rect x="336" y="724" width="2" height="10" fill="#6e6e6e"/>
<rect x="458" y="322" width="2" height="402" fill="#585858"/>
<rect x="458" y="724" width="2" height="6" fill="#555"/>
<rect x="582" y="322" width="2" height="402" fill="#7a7a7a"/>
<rect x="582" y="724" width="2" height="10" fill="#6e6e6e"/>
<rect x="704" y="322" width="2" height="402" fill="#585858"/>
<rect x="704" y="724" width="2" height="6" fill="#555"/>
<rect x="828" y="322" width="2" height="402" fill="#7a7a7a"/>
<rect x="828" y="724" width="2" height="10" fill="#6e6e6e"/>
<rect x="950" y="322" width="2" height="402" fill="#585858"/>
<rect x="950" y="724" width="2" height="6" fill="#555"/>
<rect x="1074" y="322" width="2" height="402" fill="#7a7a7a"/>
<rect x="1074" y="724" width="2" height="10" fill="#6e6e6e"/>
<rect x="1196" y="322" width="2" height="402" fill="#585858"/>
<rect x="1196" y="724" width="2" height="6" fill="#555"/>
<rect x="1320" y="322" width="2" height="402" fill="#7a7a7a"/>
<rect x="1320" y="724" width="2" height="10" fill="#6e6e6e"/>
<rect x="1444" y="322" width="2" height="402" fill="#585858"/>
<rect x="1444" y="724" width="2" height="6" fill="#555"/>
<rect x="1566" y="322" width="2" height="402" fill="#7a7a7a"/>
<rect x="1566" y="724" width="2" height="10" fill="#6e6e6e"/>
<rect x="1690" y="322" width="2" height="402" fill="#585858"/>
<rect x="1690" y="724" width="2" height="6" fill="#555"/>
<rect x="1812" y="322" width="2" height="402" fill="#7a7a7a"/>
<rect x="1812" y="724" width="2" height="10" fill="#6e6e6e"/>
<rect x="1936" y="322" width="2" height="402" fill="#585858"/>
<rect x="1936" y="724" width="2" height="6" fill="#555"/>
<rect x="2058" y="322" width="2" height="402" fill="#7a7a7a"/>
<rect x="2058" y="724" width="2" height="10" fill="#6e6e6e"/>
<rect x="2182" y="322" width="2" height="402" fill="#585858"/>
<rect x="2182" y="724" width="2" height="6" fill="#555"/>
<rect x="2304" y="322" width="2" height="402" fill="#7a7a7a"/>
<rect x="2304" y="724" width="2" height="10" fill="#6e6e6e"/>
<rect x="2428" y="322" width="2" height="402" fill="#585858"/>
<rect x="2428" y="724" width="2" height="6" fill="#555"/>
<rect x="2552" y="322" width="2" height="402" fill="#7a7a7a"/>
<rect x="2552" y="724" width="2" height="10" fill="#6e6e6e"/>
<rect x="84" y="322" width="2474" height="2" fill="#7f7f7f"/>
<rect x="84" y="358" width="2474" height="2" fill="#7f7f7f"/>
<rect x="84" y="394" width="2474" height="2" fill="#7f7f7f"/>
<rect x="84" y="430" width="2474" height="2" fill="#7f7f7f"/>
<rect x="84" y="468" width="2474" height="2" fill="#7f7f7f"/>
<rect x="84" y="504" width="2474" height="2" fill="#7f7f7f"/>
<rect x="84" y="540" width="2474" height="2" fill="#7f7f7f"/>
<rect x="84" y="576" width="2474" height="2" fill="#7f7f7f"/>
<rect x="84" y="614" width="2474" height="2" fill="#7f7f7f"/>
<rect x="84" y="650" width="2474" height="2" fill="#7f7f7f"/>
<rect x="84" y="686" width="2474" height="2" fill="#7f7f7f"/>
<polyline fill="none" stroke="#ff8c1a" stroke-width="2" stroke-linejoin="miter" points="90.5,396.0 96.0,415.0 103.2,437.0 108.0,418.0 113.6,392.2 117.4,389.2 130.0,387.5 143.5,386.0 144.8,385.0 165.2,385.0 171.2,391.2 177.2,395.5 183.2,390.2 189.2,383.0 231.1,383.0 232.3,385.0 239.1,385.0 245.1,391.2 251.1,395.5 257.1,390.2 263.1,383.0 288.5,383.0 289.3,384.9 290.3,401.5 291.0,429.8 293.5,463.0 295.3,493.8 297.0,526.8 298.5,556.4 300.0,556.8 301.0,574.0 301.8,556.8 302.6,556.4 303.5,526.8 305.2,493.8 307.7,463.0 309.0,429.8 311.0,401.5 312.7,384.9 313.5,385.0 343.5,385.0 344.7,383.0 363.2,383.0 369.2,391.0 375.2,397.0 381.2,391.0 387.2,383.0 441.2,383.0 442.4,385.0 449.2,385.0 455.2,393.0 461.2,399.0 467.2,392.0 473.2,383.0 495.2,383.0 496.4,385.0 522.9,385.0 528.9,392.0 534.9,397.0 540.9,391.0 546.9,383.0 568.9,383.0 570.1,385.0 592.1,385.0 593.3,383.0 608.6,383.0 609.4,385.0 610.4,402.5 611.1,432.2 613.6,467.2 615.4,499.6 617.1,534.4 618.6,565.5 620.1,565.9 621.1,584.0 621.9,565.9 622.7,565.5 623.6,534.4 625.3,499.6 627.8,467.2 629.1,432.2 631.1,402.5 632.8,385.0 633.6,385.0 677.1,385.0 678.3,383.0 685.1,383.0 691.1,392.0 697.1,399.0 703.1,392.0 709.1,383.0 731.1,383.0 732.3,385.0 759.0,385.0 765.0,392.0 771.0,397.0 777.0,391.0 783.0,383.0 813.0,383.0 814.2,385.0 845.0,385.0 851.0,393.0 857.0,399.0 863.0,392.0 869.0,383.0 891.0,383.0 892.2,385.0 918.8,385.0 919.6,385.0 920.6,402.5 921.3,432.2 923.8,467.2 925.6,499.6 927.3,534.4 928.8,565.5 930.3,565.9 931.3,584.0 932.1,565.9 932.9,565.5 933.8,534.4 935.5,499.6 938.0,467.2 939.3,432.2 941.3,402.5 943.0,385.0 943.8,385.0 965.8,385.0 967.0,383.0 996.5,383.0 997.7,385.0 1004.5,385.0 1010.5,394.0 1016.5,401.0 1022.5,393.0 1028.5,383.0 1073.0,383.0 1074.2,385.0 1081.0,385.0 1087.0,393.0 1093.0,399.0 1099.0,392.0 1105.0,383.0 1127.0,383.0 1128.2,385.0 1154.7,385.0 1160.7,392.0 1166.7,397.0 1172.7,391.0 1178.7,383.0 1208.7,383.0 1209.9,385.0 1240.1,385.0 1240.9,385.0 1241.9,402.5 1242.6,432.2 1245.1,467.2 1246.9,499.6 1248.6,534.4 1250.1,565.5 1251.6,565.9 1252.6,584.0 1253.4,565.9 1254.2,565.5 1255.1,534.4 1256.8,499.6 1259.3,467.2 1260.6,432.2 1262.6,402.5 1264.3,385.0 1265.1,385.0 1287.1,385.0 1288.3,383.0 1314.6,383.0 1320.6,391.0 1326.6,397.0 1332.6,391.0 1338.6,383.0 1392.8,383.0 1394.0,385.0 1400.8,385.0 1406.8,394.0 1412.8,401.0 1418.8,393.0 1424.8,383.0 1446.8,383.0 1448.0,385.0 1476.8,385.0 1482.8,393.0 1488.8,399.0 1494.8,392.0 1500.8,383.0 1522.8,383.0 1524.0,385.0 1550.5,385.0 1551.3,385.4 1552.3,406.3 1553.0,441.9 1555.5,483.7 1557.3,522.4 1559.0,564.0 1560.5,601.3 1562.0,601.8 1563.0,623.4 1563.8,601.8 1564.6,601.3 1565.5,564.0 1567.2,522.4 1569.7,483.7 1571.0,441.9 1573.0,406.3 1574.7,385.4 1575.5,385.0 1605.5,385.0 1606.7,383.0 1637.0,383.0 1643.0,392.0 1649.0,399.0 1655.0,392.0 1661.0,383.0 1683.0,383.0 1684.2,385.0 1710.5,385.0 1716.5,392.0 1722.5,397.0 1728.5,391.0 1734.5,383.0 1789.2,383.0 1790.4,385.0 1797.2,385.0 1803.2,394.0 1809.2,401.0 1815.2,393.0 1821.2,383.0 1843.2,383.0 1844.4,385.0 1870.2,385.0 1871.0,385.0 1872.0,402.5 1872.7,432.2 1875.2,467.2 1877.0,499.6 1878.7,534.4 1880.2,565.5 1881.7,565.9 1882.7,584.0 1883.5,565.9 1884.3,565.5 1885.2,534.4 1886.9,499.6 1889.4,467.2 1890.7,432.2 1892.7,402.5 1894.4,385.0 1895.2,385.0 1925.2,385.0 1926.4,383.0 1947.2,383.0 1953.2,391.0 1959.2,397.0 1965.2,391.0 1971.2,383.0 1993.2,383.0 1994.4,385.0 2024.4,385.0 2025.6,383.0 2032.8,383.0 2038.8,392.0 2044.8,399.0 2050.8,392.0 2056.8,383.0 2098.8,383.0 2100.0,385.0 2106.8,385.0 2112.8,392.0 2118.8,397.0 2124.8,391.0 2130.8,383.0 2184.3,383.0 2185.5,385.0 2192.3,385.0 2193.1,385.0 2194.1,402.5 2194.8,432.2 2197.3,467.2 2199.1,499.6 2200.8,534.4 2202.3,565.5 2203.8,565.9 2204.8,584.0 2205.6,565.9 2206.4,565.5 2207.3,534.4 2209.0,499.6 2211.5,467.2 2212.8,432.2 2214.8,402.5 2216.5,385.0 2217.3,385.0 2247.3,385.0 2248.5,383.0 2267.0,383.0 2273.0,392.0 2279.0,399.0 2285.0,392.0 2291.0,383.0 2313.0,383.0 2314.2,385.0 2343.0,385.0 2349.0,392.0 2355.0,397.0 2361.0,391.0 2367.0,383.0 2411.0,383.0 2412.2,385.0 2429.0,385.0 2435.0,393.0 2441.0,399.0 2447.0,392.0 2453.0,383.0 2483.0,383.0 2484.2,385.0 2502.5,385.0 2503.3,385.0 2504.3,402.5 2505.0,432.2 2507.5,467.2 2509.3,499.6 2511.0,534.4 2512.5,565.5 2514.0,565.9 2515.0,584.0 2515.8,565.9 2516.6,565.5 2517.5,534.4 2519.2,499.6 2521.7,467.2 2523.0,432.2 2525.0,402.5 2526.7,385.0 2527.5,385.0 2551.8,385.0"/>
<polyline fill="none" stroke="#1eb8f4" stroke-width="2" stroke-linejoin="miter" points="90.5,414.6 93.7,397.0 98.7,374.8 103.7,359.8 114.9,344.9 126.0,357.8 132.0,356.5 138.5,355.3 151.0,371.0 163.5,352.4 172.0,345.0 176.0,343.1 214.8,343.1 227.0,361.0 239.2,343.1 288.8,343.1 301.0,363.0 313.2,343.1 324.5,343.1 326.5,346.5 333.0,346.5 335.0,343.1 363.0,343.1 375.2,361.0 387.4,343.1 437.0,343.1 449.2,361.0 461.4,343.1 510.8,343.1 523.0,361.0 535.2,343.1 584.8,343.1 597.0,361.0 609.2,343.1 627.0,343.1 629.0,345.0 649.0,345.0 651.0,343.1 659.5,343.1 671.7,361.0 683.9,343.1 733.5,343.1 745.7,361.0 757.9,343.1 807.5,343.1 819.7,361.0 831.9,343.1 882.9,343.1 895.1,361.0 907.3,343.1 956.9,343.1 969.1,361.0 981.3,343.1 1030.9,343.1 1043.1,361.0 1055.3,343.1 1105.2,343.1 1117.4,361.0 1129.6,343.1 1178.7,343.1 1190.9,361.0 1203.1,343.1 1252.9,343.1 1265.1,361.0 1277.3,343.1 1327.4,343.1 1339.6,361.0 1351.8,343.1 1401.4,343.1 1413.6,361.0 1425.8,343.1 1476.6,343.1 1488.8,361.0 1501.0,343.1 1550.8,343.1 1563.0,361.0 1575.2,343.1 1625.1,343.1 1637.3,361.0 1649.5,343.1 1698.6,343.1 1710.8,367.3 1723.0,343.1 1772.6,343.1 1784.8,361.0 1797.0,343.1 1846.6,343.1 1858.8,361.0 1871.0,343.1 1884.7,343.1 1886.7,346.5 1904.6,346.5 1906.6,343.1 1920.8,343.1 1933.0,361.0 1945.2,343.1 1994.8,343.1 2007.0,361.0 2019.2,343.1 2051.0,343.1 2053.0,345.0 2060.0,345.0 2062.0,343.1 2069.5,343.1 2081.7,361.0 2093.9,343.1 2144.3,343.1 2156.5,361.0 2168.7,343.1 2219.0,343.1 2231.2,367.3 2243.4,343.1 2293.0,343.1 2305.2,361.0 2317.4,343.1 2367.0,343.1 2379.2,361.0 2391.4,343.1 2441.2,343.1 2453.4,361.0 2465.6,343.1 2471.0,343.1 2473.0,345.0 2482.6,345.0 2484.6,343.1 2514.8,343.1 2527.0,361.0 2539.4,343.1 2553.6,375.0"/>
</svg>
<span class="t fsans" id="t19" style="top:312.32px;font-size:21.60px;color:#111;right:2801.40px;transform-origin:100% 0;">550</span>
<span class="t fsans" id="t20" style="top:312.32px;font-size:21.60px;color:#111;left:2562.50px;transform-origin:0 0;">55</span>
<span class="t fsans" id="t21" style="top:348.32px;font-size:21.60px;color:#111;right:2801.40px;transform-origin:100% 0;">500</span>
<span class="t fsans" id="t22" style="top:348.32px;font-size:21.60px;color:#111;left:2562.50px;transform-origin:0 0;">50</span>
<span class="t fsans" id="t23" style="top:384.32px;font-size:21.60px;color:#111;right:2801.40px;transform-origin:100% 0;">450</span>
<span class="t fsans" id="t24" style="top:384.32px;font-size:21.60px;color:#111;left:2562.50px;transform-origin:0 0;">45</span>
<span class="t fsans" id="t25" style="top:420.32px;font-size:21.60px;color:#111;right:2801.40px;transform-origin:100% 0;">400</span>
<span class="t fsans" id="t26" style="top:420.32px;font-size:21.60px;color:#111;left:2562.50px;transform-origin:0 0;">40</span>
<span class="t fsans" id="t27" style="top:458.32px;font-size:21.60px;color:#111;right:2801.40px;transform-origin:100% 0;">350</span>
<span class="t fsans" id="t28" style="top:458.32px;font-size:21.60px;color:#111;left:2562.50px;transform-origin:0 0;">35</span>
<span class="t fsans" id="t29" style="top:494.32px;font-size:21.60px;color:#111;right:2801.40px;transform-origin:100% 0;">300</span>
<span class="t fsans" id="t30" style="top:494.32px;font-size:21.60px;color:#111;left:2562.50px;transform-origin:0 0;">30</span>
<span class="t fsans" id="t31" style="top:530.32px;font-size:21.60px;color:#111;right:2801.40px;transform-origin:100% 0;">250</span>
<span class="t fsans" id="t32" style="top:530.32px;font-size:21.60px;color:#111;left:2562.50px;transform-origin:0 0;">25</span>
<span class="t fsans" id="t33" style="top:566.32px;font-size:21.60px;color:#111;right:2801.40px;transform-origin:100% 0;">200</span>
<span class="t fsans" id="t34" style="top:566.32px;font-size:21.60px;color:#111;left:2562.50px;transform-origin:0 0;">20</span>
<span class="t fsans" id="t35" style="top:604.32px;font-size:21.60px;color:#111;right:2801.40px;transform-origin:100% 0;">150</span>
<span class="t fsans" id="t36" style="top:604.32px;font-size:21.60px;color:#111;left:2562.50px;transform-origin:0 0;">15</span>
<span class="t fsans" id="t37" style="top:640.32px;font-size:21.60px;color:#111;right:2801.40px;transform-origin:100% 0;">100</span>
<span class="t fsans" id="t38" style="top:640.32px;font-size:21.60px;color:#111;left:2562.50px;transform-origin:0 0;">10</span>
<span class="t fsans" id="t39" style="top:676.32px;font-size:21.60px;color:#111;right:2801.40px;transform-origin:100% 0;">50</span>
<span class="t fsans" id="t40" style="top:676.32px;font-size:21.60px;color:#111;left:2562.50px;transform-origin:0 0;">5</span>
<span class="t fsans" id="t41" style="top:735.52px;font-size:21.60px;color:#111;left:91.00px;transform-origin:0 0;transform:translateX(-50%);">0</span>
<span class="t fsans" id="t42" style="top:735.52px;font-size:21.60px;color:#111;left:337.00px;transform-origin:0 0;transform:translateX(-50%);">50</span>
<span class="t fsans" id="t43" style="top:735.52px;font-size:21.60px;color:#111;left:583.00px;transform-origin:0 0;transform:translateX(-50%);">100</span>
<span class="t fsans" id="t44" style="top:735.52px;font-size:21.60px;color:#111;left:829.00px;transform-origin:0 0;transform:translateX(-50%);">150</span>
<span class="t fsans" id="t45" style="top:735.52px;font-size:21.60px;color:#111;left:1075.00px;transform-origin:0 0;transform:translateX(-50%);">200</span>
<span class="t fsans" id="t46" style="top:735.52px;font-size:21.60px;color:#111;left:1321.00px;transform-origin:0 0;transform:translateX(-50%);">250</span>
<span class="t fsans" id="t47" style="top:735.52px;font-size:21.60px;color:#111;left:1567.00px;transform-origin:0 0;transform:translateX(-50%);">300</span>
<span class="t fsans" id="t48" style="top:735.52px;font-size:21.60px;color:#111;left:1813.00px;transform-origin:0 0;transform:translateX(-50%);">350</span>
<span class="t fsans" id="t49" style="top:735.52px;font-size:21.60px;color:#111;left:2059.00px;transform-origin:0 0;transform:translateX(-50%);">400</span>
<span class="t fsans" id="t50" style="top:735.52px;font-size:21.60px;color:#111;left:2305.00px;transform-origin:0 0;transform:translateX(-50%);">450</span>
<span class="t fsans" id="t51" style="top:735.52px;font-size:21.60px;color:#111;left:2552.00px;transform-origin:0 0;transform:translateX(-50%);">500mB</span>
<span class="t fsans" id="t52" style="top:297.12px;font-size:21.60px;color:#222;left:90.40px;transform-origin:0 0;">MB/s</span>
<span class="t fsans" id="t53" style="top:297.12px;font-size:21.60px;color:#222;right:329.00px;transform-origin:100% 0;">ms</span>
<span class="t fsans" id="t54" style="top:322.92px;font-size:21.60px;color:#aaaaa2;left:96.00px;transform-origin:0 0;transform:scaleX(1.0054);">trial version</span>
<div class="a" style="left:90.00px;top:800.00px;width:2390.00px;height:4.00px;background:#6a6a6a;"></div>
<div class="a" style="left:516.00px;top:763.00px;width:4.00px;height:195.00px;background:#6a6a6a;"></div>
<div class="a" style="left:712.00px;top:763.00px;width:4.00px;height:195.00px;background:#6a6a6a;"></div>
<span class="t fsans" id="t55" style="top:766.98px;font-size:24.00px;color:#000;left:584.80px;transform-origin:0 0;transform:scaleX(1.0004);">Read</span>
<span class="t fsans" id="t56" style="top:766.98px;font-size:24.00px;color:#000;left:786.80px;transform-origin:0 0;transform:scaleX(1.0925);">Write</span>
<span class="t fsans" id="t57" style="top:817.28px;font-size:24.00px;color:#000;left:100.30px;transform-origin:0 0;transform:scaleX(1.0508);">Sequential</span>
<span class="t fsans" id="t58" style="top:869.48px;font-size:24.00px;color:#000;left:96.20px;transform-origin:0 0;transform:scaleX(1.0930);">4 KB random</span>
<span class="t fsans" id="t59" style="top:919.68px;font-size:24.00px;color:#000;left:96.20px;transform-origin:0 0;transform:scaleX(1.0930);">4 KB random</span>
<span class="t fmono" id="t60" style="top:815.88px;font-size:23.00px;color:#000;font-weight:bold;right:2175.00px;transform-origin:100% 0;transform:scaleX(1.0077);-webkit-text-stroke:0.5px #000;">495408 KB/s</span>
<span class="t fmono" id="t61" style="top:867.38px;font-size:23.00px;color:#000;font-weight:bold;right:2175.00px;transform-origin:100% 0;transform:scaleX(1.0102);-webkit-text-stroke:0.5px #000;">8945 IOPS</span>
<span class="t fmono" id="t62" style="top:917.38px;font-size:23.00px;color:#000;font-weight:bold;right:2175.00px;transform-origin:100% 0;transform:scaleX(1.0106);-webkit-text-stroke:0.5px #000;">22673 IOPS</span>
<span class="t fmono" id="t63" style="top:815.88px;font-size:23.00px;color:#000;font-weight:bold;right:1973.00px;transform-origin:100% 0;transform:scaleX(1.0077);-webkit-text-stroke:0.5px #000;">426094 KB/s</span>
<span class="t fmono" id="t64" style="top:867.38px;font-size:23.00px;color:#000;font-weight:bold;right:1973.00px;transform-origin:100% 0;transform:scaleX(1.0106);-webkit-text-stroke:0.5px #000;">10764 IOPS</span>
<span class="t fmono" id="t65" style="top:917.38px;font-size:23.00px;color:#000;font-weight:bold;right:1973.00px;transform-origin:100% 0;transform:scaleX(1.0106);-webkit-text-stroke:0.5px #000;">49677 IOPS</span>
<div class="a" style="left:357.00px;top:903.00px;width:44.00px;height:51.00px;background:#fff;border:1px solid #ececec;border-bottom:2px solid #868686;box-sizing:border-box;border-radius:3px 0 0 3px;"></div>
<div class="a" style="left:401.00px;top:902.30px;width:35.00px;height:51.70px;background:#c8c8c8;border:1.5px solid #9c9c9c;box-sizing:border-box;"></div>
<div class="a" style="left:404.00px;top:905.30px;width:29.00px;height:20.85px;background:#e2e2e2;border:1px solid #adadad;box-sizing:border-box;"></div>
<svg class="a" style="left:0;top:0" width="2880" height="1526"><rect x="417.0" y="913.0" width="2" height="2" fill="#000"/><rect x="415.0" y="915.0" width="6" height="2" fill="#000"/><rect x="413.0" y="917.0" width="10" height="2" fill="#000"/></svg>
<div class="a" style="left:404.00px;top:930.15px;width:29.00px;height:20.85px;background:#e2e2e2;border:1px solid #adadad;box-sizing:border-box;"></div>
<svg class="a" style="left:0;top:0" width="2880" height="1526"><rect x="413.0" y="938.0" width="10" height="2" fill="#000"/><rect x="415.0" y="940.0" width="6" height="2" fill="#000"/><rect x="417.0" y="942.0" width="2" height="2" fill="#000"/></svg>
<span class="t fsans" id="t66" style="top:913.08px;font-size:24.00px;color:#000;left:365.00px;transform-origin:0 0;transform:scaleX(0.9737);">32</span>
<div class="a" style="left:30.00px;top:974.50px;width:2797.00px;height:2.00px;background:#cfcfcf;"></div>
<div class="a" style="left:100.30px;top:998.20px;width:25.00px;height:25.00px;background:#f3f3f3;border:2px solid #7c7c7c;border-radius:6px;box-sizing:border-box;"></div>
<span class="t fsans" id="t67" style="top:998.88px;font-size:24.00px;color:#000;left:132.70px;transform-origin:0 0;transform:scaleX(1.0760);">Block size measurement</span>
<svg class="a" style="left:0;top:1000px" width="2880" height="526" viewBox="0 1000 2880 526">
<defs><linearGradient id="cg2" x1="0" y1="0" x2="0" y2="1"><stop offset="0" stop-color="#000"/><stop offset="0.1" stop-color="#040404"/><stop offset="1" stop-color="#434343"/></linearGradient></defs>
<rect x="62.0" y="1066.0" width="2536.0" height="316.0" fill="#000"/>
<rect x="66.0" y="1070.0" width="2528.0" height="308.0" fill="url(#cg2)"/>
<rect x="66.0" y="1100" width="2532.0" height="2" fill="#484848"/>
<rect x="66.0" y="1162" width="2532.0" height="2" fill="#484848"/>
<rect x="66.0" y="1222" width="2532.0" height="2" fill="#484848"/>
<rect x="66.0" y="1284" width="2532.0" height="2" fill="#484848"/>
<rect x="66.0" y="1346" width="2532.0" height="2" fill="#484848"/>
<rect x="150" y="1070.0" width="2" height="318.0" fill="#6c6c6c"/>
<rect x="318" y="1070.0" width="2" height="318.0" fill="#6c6c6c"/>
<rect x="486" y="1070.0" width="2" height="318.0" fill="#6c6c6c"/>
<rect x="654" y="1070.0" width="2" height="318.0" fill="#6c6c6c"/>
<rect x="824" y="1070.0" width="2" height="318.0" fill="#6c6c6c"/>
<rect x="992" y="1070.0" width="2" height="318.0" fill="#6c6c6c"/>
<rect x="1160" y="1070.0" width="2" height="318.0" fill="#6c6c6c"/>
<rect x="1328" y="1070.0" width="2" height="318.0" fill="#6c6c6c"/>
<rect x="1498" y="1070.0" width="2" height="318.0" fill="#6c6c6c"/>
<rect x="1666" y="1070.0" width="2" height="318.0" fill="#6c6c6c"/>
<rect x="1834" y="1070.0" width="2" height="318.0" fill="#6c6c6c"/>
<rect x="2002" y="1070.0" width="2" height="318.0" fill="#6c6c6c"/>
<rect x="2172" y="1070.0" width="2" height="318.0" fill="#6c6c6c"/>
<rect x="2340" y="1070.0" width="2" height="318.0" fill="#6c6c6c"/>
<rect x="2508" y="1070.0" width="2" height="318.0" fill="#6c6c6c"/>
<rect x="62.0" y="1070" width="2538.0" height="2" fill="#757575"/>
<rect x="62.0" y="1130" width="2538.0" height="2" fill="#757575"/>
<rect x="62.0" y="1192" width="2538.0" height="2" fill="#757575"/>
<rect x="62.0" y="1254" width="2538.0" height="2" fill="#757575"/>
<rect x="62.0" y="1316" width="2538.0" height="2" fill="#757575"/>
<defs><linearGradient id="lb" x1="0" y1="0" x2="0.6" y2="1"><stop offset="0" stop-color="#0880c0"/><stop offset="1" stop-color="#10b0e8"/></linearGradient><linearGradient id="lo" x1="0" y1="0" x2="0.6" y2="1"><stop offset="0" stop-color="#c06000"/><stop offset="1" stop-color="#f88808"/></linearGradient></defs>
<rect x="2468" y="1044" width="18" height="18" fill="#18b0e8"/><rect x="2470" y="1046" width="16" height="16" fill="#0870a8"/><rect x="2470" y="1046" width="14" height="14" fill="url(#lb)"/>
<rect x="2540" y="1044" width="18" height="18" fill="#f89010"/><rect x="2542" y="1046" width="16" height="16" fill="#a85000"/><rect x="2542" y="1046" width="14" height="14" fill="url(#lo)"/>
</svg>
<span class="t fsans" id="t68" style="top:1060.32px;font-size:21.60px;color:#111;right:2825.00px;transform-origin:100% 0;">25</span>
<span class="t fsans" id="t69" style="top:1120.32px;font-size:21.60px;color:#111;right:2825.00px;transform-origin:100% 0;">20</span>
<span class="t fsans" id="t70" style="top:1182.32px;font-size:21.60px;color:#111;right:2825.00px;transform-origin:100% 0;">15</span>
<span class="t fsans" id="t71" style="top:1244.32px;font-size:21.60px;color:#111;right:2825.00px;transform-origin:100% 0;">10</span>
<span class="t fsans" id="t72" style="top:1306.32px;font-size:21.60px;color:#111;right:2825.00px;transform-origin:100% 0;">5</span>
<span class="t fsans" id="t73" style="top:1391.92px;font-size:21.60px;color:#111;left:150.00px;transform-origin:0 0;transform:translateX(-50%);">0.5</span>
<span class="t fsans" id="t74" style="top:1391.92px;font-size:21.60px;color:#111;left:318.00px;transform-origin:0 0;transform:translateX(-50%);">1</span>
<span class="t fsans" id="t75" style="top:1391.92px;font-size:21.60px;color:#111;left:486.00px;transform-origin:0 0;transform:translateX(-50%);">2</span>
<span class="t fsans" id="t76" style="top:1391.92px;font-size:21.60px;color:#111;left:654.00px;transform-origin:0 0;transform:translateX(-50%);">4</span>
<span class="t fsans" id="t77" style="top:1391.92px;font-size:21.60px;color:#111;left:824.00px;transform-origin:0 0;transform:translateX(-50%);">8</span>
<span class="t fsans" id="t78" style="top:1391.92px;font-size:21.60px;color:#111;left:992.00px;transform-origin:0 0;transform:translateX(-50%);">16</span>
<span class="t fsans" id="t79" style="top:1391.92px;font-size:21.60px;color:#111;left:1160.00px;transform-origin:0 0;transform:translateX(-50%);">32</span>
<span class="t fsans" id="t80" style="top:1391.92px;font-size:21.60px;color:#111;left:1328.00px;transform-origin:0 0;transform:translateX(-50%);">64</span>
<span class="t fsans" id="t81" style="top:1391.92px;font-size:21.60px;color:#111;left:1498.00px;transform-origin:0 0;transform:translateX(-50%);">128</span>
<span class="t fsans" id="t82" style="top:1391.92px;font-size:21.60px;color:#111;left:1666.00px;transform-origin:0 0;transform:translateX(-50%);">256</span>
<span class="t fsans" id="t83" style="top:1391.92px;font-size:21.60px;color:#111;left:1834.00px;transform-origin:0 0;transform:translateX(-50%);">512</span>
<span class="t fsans" id="t84" style="top:1391.92px;font-size:21.60px;color:#111;left:2002.00px;transform-origin:0 0;transform:translateX(-50%);">1024</span>
<span class="t fsans" id="t85" style="top:1391.92px;font-size:21.60px;color:#111;left:2172.00px;transform-origin:0 0;transform:translateX(-50%);">2048</span>
<span class="t fsans" id="t86" style="top:1391.92px;font-size:21.60px;color:#111;left:2340.00px;transform-origin:0 0;transform:translateX(-50%);">4096</span>
<span class="t fsans" id="t87" style="top:1391.92px;font-size:21.60px;color:#111;left:2508.00px;transform-origin:0 0;transform:translateX(-50%);">8192</span>
<span class="t fsans" id="t88" style="top:1043.22px;font-size:21.60px;color:#222;left:67.40px;transform-origin:0 0;transform:scaleX(0.9352);">MB/s</span>
<span class="t fsans" id="t89" style="top:1041.52px;font-size:21.60px;color:#222;left:2486.50px;transform-origin:0 0;transform:scaleX(0.9830);">read</span>
<span class="t fsans" id="t90" style="top:1041.52px;font-size:21.60px;color:#222;left:2560.00px;transform-origin:0 0;transform:scaleX(1.0418);">write</span>
<div class="a" style="left:2660.50px;top:250.00px;width:171.00px;height:55.50px;background:#fdfdfd;border:1.5px solid #0a64bc;border-radius:7px;box-sizing:border-box;"><div style="position:absolute;left:1.5px;top:1.5px;right:1.5px;bottom:1.5px;border:2px dotted #000;border-radius:3px;"></div></div>
<span class="t fsans" id="t91" style="top:265.18px;font-size:24.00px;color:#000;left:2719.20px;transform-origin:0 0;transform:scaleX(1.0456);">Start</span>
<span class="t fsans" id="t92" style="top:329.28px;font-size:24.00px;color:#000;left:2659.20px;transform-origin:0 0;transform:scaleX(1.0444);">Drive</span>
<div class="a" style="left:2659.00px;top:373.00px;width:174.00px;height:48.00px;background:#fdfdfd;border:1px solid #ececec;border-bottom:2px solid #cacaca;border-radius:4px;box-sizing:border-box;"></div>
<svg class="a" style="left:2806.5px;top:390.5px" width="20" height="14" viewBox="0 0 20 14" fill="none" stroke="#7a7a7a" stroke-width="1.6"><path d="M2.5,3 L10,10.2 L17.5,3"/></svg>
<span class="t fsans" id="t93" style="top:385.28px;font-size:24.00px;color:#000;left:2667.40px;transform-origin:0 0;transform:scaleX(0.9708);">D:</span>
<span class="t fsans" id="t94" style="top:449.28px;font-size:24.00px;color:#000;left:2660.00px;transform-origin:0 0;transform:scaleX(0.8921);">File</span>
<div class="a" style="left:2659.70px;top:509.00px;width:92.90px;height:50.00px;background:#fff;border:1px solid #ececec;border-bottom:2px solid #868686;box-sizing:border-box;border-radius:3px 0 0 3px;"></div>
<div class="a" style="left:2752.60px;top:508.30px;width:34.80px;height:50.70px;background:#c8c8c8;border:1.5px solid #9c9c9c;box-sizing:border-box;"></div>
<div class="a" style="left:2755.60px;top:511.30px;width:28.80px;height:20.35px;background:#e2e2e2;border:1px solid #adadad;box-sizing:border-box;"></div>
<svg class="a" style="left:0;top:0" width="2880" height="1526"><rect x="2769.0" y="518.0" width="2" height="2" fill="#000"/><rect x="2767.0" y="520.0" width="6" height="2" fill="#000"/><rect x="2765.0" y="522.0" width="10" height="2" fill="#000"/></svg>
<div class="a" style="left:2755.60px;top:535.65px;width:28.80px;height:20.35px;background:#e2e2e2;border:1px solid #adadad;box-sizing:border-box;"></div>
<svg class="a" style="left:0;top:0" width="2880" height="1526"><rect x="2765.0" y="543.0" width="10" height="2" fill="#000"/><rect x="2767.0" y="545.0" width="6" height="2" fill="#000"/><rect x="2769.0" y="547.0" width="2" height="2" fill="#000"/></svg>
<span class="t fsans" id="t95" style="top:519.08px;font-size:24.00px;color:#000;left:2667.30px;transform-origin:0 0;transform:scaleX(1.0088);">500</span>
<span class="t fsans" id="t96" style="top:529.18px;font-size:24.00px;color:#000;left:2791.60px;transform-origin:0 0;transform:scaleX(1.0278);">MB</span>
<span class="t fsans" id="t97" style="top:609.48px;font-size:24.00px;color:#000;left:2659.70px;transform-origin:0 0;transform:scaleX(0.9980);">Data</span>
<div class="a" style="left:2659.00px;top:656.70px;width:173.50px;height:48.00px;background:#fdfdfd;border:1px solid #ececec;border-bottom:2px solid #cacaca;border-radius:4px;box-sizing:border-box;"></div>
<svg class="a" style="left:2806.0px;top:674.2px" width="20" height="14" viewBox="0 0 20 14" fill="none" stroke="#7a7a7a" stroke-width="1.6"><path d="M2.5,3 L10,10.2 L17.5,3"/></svg>
<span class="t fsans" id="t98" style="top:668.98px;font-size:24.00px;color:#000;left:2666.40px;transform-origin:0 0;transform:scaleX(1.0535);">Zero</span>
<span class="t fsans" id="t99" style="top:1135.48px;font-size:24.00px;color:#000;left:2661.00px;transform-origin:0 0;transform:scaleX(0.9568);">File</span>
<div class="a" style="left:2659.00px;top:1187.00px;width:174.00px;height:48.00px;background:#fdfdfd;border:1px solid #ececec;border-bottom:2px solid #cacaca;border-radius:4px;box-sizing:border-box;"></div>
<svg class="a" style="left:2806.5px;top:1204.5px" width="20" height="14" viewBox="0 0 20 14" fill="none" stroke="#7a7a7a" stroke-width="1.6"><path d="M2.5,3 L10,10.2 L17.5,3"/></svg>
<span class="t fsans" id="t100" style="top:1199.68px;font-size:24.00px;color:#000;left:2666.80px;transform-origin:0 0;transform:scaleX(1.0667);">64 MB</span>
<span class="t fsans" id="t101" style="top:1275.68px;font-size:24.00px;color:#000;left:2661.00px;transform-origin:0 0;transform:scaleX(1.0267);">Delay</span>
<div class="a" style="left:2661.00px;top:1323.00px;width:124.00px;height:50.50px;background:#fff;border:1px solid #ececec;border-bottom:2px solid #868686;box-sizing:border-box;border-radius:3px;"></div>
<span class="t fsans" id="t102" style="top:1333.68px;font-size:24.00px;color:#000;left:2669.30px;transform-origin:0 0;">0</span>
<div class="a" style="left:2796.00px;top:1318.00px;width:30.00px;height:55.50px;background:#c4c4c4;"></div>
<div class="a" style="left:2796.00px;top:1318.00px;width:30.00px;height:25.75px;background:#e2e2e2;border:1px solid #adadad;box-sizing:border-box;"></div>
<svg class="a" style="left:0;top:0" width="2880" height="1526"><rect x="2810.0" y="1328.0" width="2" height="2" fill="#000"/><rect x="2808.0" y="1330.0" width="6" height="2" fill="#000"/><rect x="2806.0" y="1332.0" width="10" height="2" fill="#000"/></svg>
<div class="a" style="left:2796.00px;top:1347.75px;width:30.00px;height:25.75px;background:#e2e2e2;border:1px solid #adadad;box-sizing:border-box;"></div>
<svg class="a" style="left:0;top:0" width="2880" height="1526"><rect x="2806.0" y="1358.0" width="10" height="2" fill="#000"/><rect x="2808.0" y="1360.0" width="6" height="2" fill="#000"/><rect x="2810.0" y="1362.0" width="2" height="2" fill="#000"/></svg>
</body></html>
